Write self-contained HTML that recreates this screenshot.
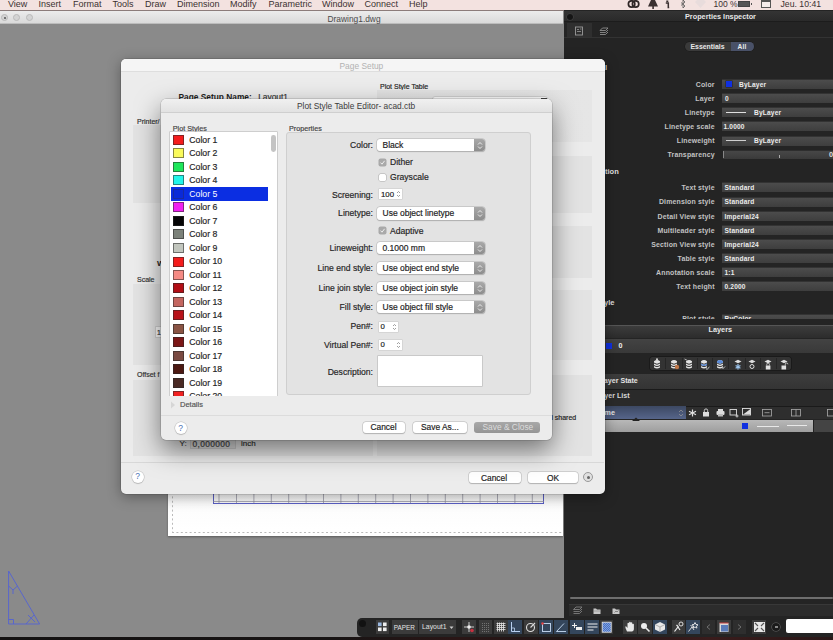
<!DOCTYPE html>
<html><head><meta charset="utf-8">
<style>
*{margin:0;padding:0;box-sizing:border-box}
html,body{width:833px;height:640px;overflow:hidden}
body{position:relative;background:#8a8a8a;font-family:"Liberation Sans",sans-serif;color:#222}
.a{position:absolute}
.t{position:absolute;white-space:nowrap;line-height:1}
.b{font-weight:bold}
.s{-webkit-text-stroke:0.18px currentColor}
</style></head><body>

<!-- menubar -->
<div class="a" style="left:0;top:0;width:833px;height:11px;background:#f3e2e0;border-bottom:1px solid #8c7c7a"></div>
<div class="t" style="left:8px;top:-0.4px;font-size:9px;color:#3b3131">View</div>
<div class="t" style="left:38.5px;top:-0.4px;font-size:9px;color:#3b3131">Insert</div>
<div class="t" style="left:73px;top:-0.4px;font-size:9px;color:#3b3131">Format</div>
<div class="t" style="left:112.5px;top:-0.4px;font-size:9px;color:#3b3131">Tools</div>
<div class="t" style="left:145px;top:-0.4px;font-size:9px;color:#3b3131">Draw</div>
<div class="t" style="left:177px;top:-0.4px;font-size:9px;color:#3b3131">Dimension</div>
<div class="t" style="left:230px;top:-0.4px;font-size:9px;color:#3b3131">Modify</div>
<div class="t" style="left:268.5px;top:-0.4px;font-size:9px;color:#3b3131">Parametric</div>
<div class="t" style="left:322px;top:-0.4px;font-size:9px;color:#3b3131">Window</div>
<div class="t" style="left:364.5px;top:-0.4px;font-size:9px;color:#3b3131">Connect</div>
<div class="t" style="left:409px;top:-0.4px;font-size:9px;color:#3b3131">Help</div>


<!-- menubar status icons -->
<svg class="a" style="left:626.5px;top:0" width="14" height="9"><circle cx="4.6" cy="4" r="3.2" stroke="#2e2626" stroke-width="1.7" fill="none"/><circle cx="8.6" cy="4" r="3.2" stroke="#2e2626" stroke-width="1.7" fill="none"/></svg>
<svg class="a" style="left:646.5px;top:0" width="12" height="10"><path d="M4 0H8L11 6.5H1Z" fill="#3a3030"/><rect x="5.3" y="6" width="1.6" height="3" fill="#3a3030"/></svg>
<svg class="a" style="left:665px;top:0" width="5" height="9"><rect x="1.3" y="0.5" width="2" height="1.5" fill="#3a3030"/><path d="M0.8 3H3.3V7.5H4.2" stroke="#3a3030" stroke-width="1.5" fill="none"/></svg>
<svg class="a" style="left:679.5px;top:0" width="6" height="10"><path d="M1 2.5L5 6L3 8V0L5 2L1 5.5" stroke="#555" stroke-width="0.8" fill="none"/></svg>
<svg class="a" style="left:694px;top:0" width="13" height="9"><path d="M1 2L6.5 8L12 2L10 0H3Z" fill="#e8dcdc"/></svg>
<div class="t" style="left:713.5px;top:-0.2px;font-size:8.5px;color:#3b3131">100 %</div>
<div class="a" style="left:737.5px;top:0.5px;width:12.5px;height:6.5px;background:#555;border:1px solid #444"></div>
<div class="a" style="left:750.5px;top:2.5px;width:1.2px;height:2.5px;background:#555"></div>
<div class="a" style="left:760.5px;top:0;width:10px;height:8px;background:#f4eceb;border:1px solid #555;border-top:2px solid #555"></div>
<div class="t" style="left:780.5px;top:-0.2px;font-size:8.7px;color:#3b3131">Jeu. 10:41</div>
<!-- window titlebar -->
<div class="a" style="left:0;top:11px;width:563px;height:13px;background:linear-gradient(#ececec,#dadada);border-bottom:1px solid #bcbcbc"></div>
<div class="a" style="left:1px;top:14px;width:7px;height:7px;border-radius:50%;background:#d4d4d4;border:1px solid #bababa"></div>
<div class="a" style="left:3.5px;top:16.5px;width:2px;height:2px;border-radius:50%;background:#555"></div>
<div class="a" style="left:13px;top:14px;width:7px;height:7px;border-radius:50%;background:#d4d4d4;border:1px solid #bababa"></div>
<div class="a" style="left:26px;top:14px;width:7px;height:7px;border-radius:50%;background:#d4d4d4;border:1px solid #bababa"></div>
<div class="t" style="left:327.5px;top:14.5px;font-size:8.4px;color:#4a4a4a">Drawing1.dwg</div>

<!-- canvas content -->
<div id="paper" class="a" style="left:168px;top:300px;width:395px;height:235.5px;background:linear-gradient(#e6e6e6 0px,#ffffff 230px);box-shadow:0 1px 2px rgba(0,0,0,.35)"></div>


<!-- blue grid on paper -->
<svg class="a" style="left:0;top:0" width="833" height="640">
 <g stroke="#4a4ec0" stroke-width="0.9" fill="none">
  <line x1="213.5" y1="470" x2="213.5" y2="503.5"/>
  <line x1="543.5" y1="470" x2="543.5" y2="503.5"/>
  <line x1="213" y1="503.5" x2="544" y2="503.5"/>
 </g>
 <g stroke="#8c8c9c" stroke-width="0.7" fill="none">
  <line x1="213" y1="501.5" x2="544" y2="501.5"/>
  <path d="M219 470V503 M236.5 470V503 M253.9 470V503 M271.3 470V503 M288.7 470V503 M306.1 470V503 M323.5 470V503 M340.9 470V503 M358.3 470V503 M375.7 470V503 M393.1 470V503 M410.5 470V503 M427.9 470V503 M445.3 470V503 M462.7 470V503 M480.1 470V503 M497.5 470V503 M514.9 470V503 M532.3 470V503"/>
 </g>
 <g stroke="#a8a8a8" stroke-width="0.8" stroke-dasharray="2,2.4" fill="none">
  <line x1="172" y1="532.5" x2="563" y2="532.5"/>
  <line x1="172.5" y1="470" x2="172.5" y2="532"/>
 </g>
 <!-- triangle -->
 <g stroke="#5262d4" stroke-width="0.9" fill="none">
  <path d="M8.6 571 L8.6 624 L39.6 624 Z"/>
  <path d="M8.6 619.5 H13.5 V624"/>
  <path d="M8.6 586 L13 590 L17.5 586 M13 590 V594"/>
  <path d="M26 624 L34 615 M28 615 L35 622"/>
 </g>
</svg>

<!-- Right dark panel -->
<div class="a" style="left:563.5px;top:10px;width:270px;height:627px;background:#242424"></div>
<div class="a" style="left:563.5px;top:11px;width:270px;height:10.5px;background:linear-gradient(#343434,#2a2a2a);border-bottom:1px solid #1c1c1c"></div>
<div class="a" style="left:566.5px;top:14px;width:6px;height:6px;border-radius:50%;background:#151515;box-shadow:0 0 0 0.5px #444"></div>
<div class="t b" style="left:685px;top:13.4px;font-size:7.3px;color:#e6e6e6">Properties Inspector</div>
<div class="a" style="left:567px;top:22.5px;width:25px;height:14.5px;background:#2f2f2f"></div>
<div class="a" style="left:563.5px;top:37px;width:270px;height:1px;background:#333"></div>
<svg class="a" style="left:574px;top:26px" width="11" height="10"><rect x="1.5" y="1" width="7" height="8" fill="none" stroke="#9a9a9a" stroke-width="0.9"/><path d="M3 3.5h2M3 5.5h4M6 3h1.5" stroke="#9a9a9a" stroke-width="0.8"/></svg>
<svg class="a" style="left:598px;top:26px" width="12" height="10"><path d="M2 4.5L4.5 2H10L7.5 4.5Z M2 6.5H7.5L10 4 M2 8.5H7.5L10 6" stroke="#9a9a9a" stroke-width="0.8" fill="none"/></svg>
<div class="a" style="left:685px;top:41.6px;width:68.5px;height:9.2px;border-radius:4.6px;background:#3a3a3a;box-shadow:0 0 0 0.5px #1a1a1a;overflow:hidden"><div class="a" style="left:45.5px;top:0;width:23px;height:100%;background:#495168"></div></div>
<div class="t b" style="left:690.5px;top:43.5px;font-size:6.9px;color:#e8e8e8">Essentials</div>
<div class="t b" style="left:737.5px;top:44.40px;font-size:6.6px;letter-spacing:0.17px;color:#ececec">All</div>
<div class="t b" style="right:226px;top:63.5px;font-size:7.5px;color:#e0e0e0">General</div>
<div class="t b" style="left:605px;top:167.5px;font-size:7.5px;color:#e0e0e0">tion</div>
<div class="t b" style="left:604px;top:299px;font-size:7.5px;color:#e0e0e0">yle</div>
<div class="t b" style="right:118.29999999999995px;top:81.70px;font-size:6.95px;letter-spacing:0.17px;color:#c2c2c2">Color</div><div class="a" style="left:721.8px;top:78.80px;width:112px;height:10px;background:linear-gradient(#4c4c4c,#3e3e3e);border-top:1px solid #333"></div><div class="a" style="left:726px;top:80.8px;width:6px;height:6px;background:#1030e0;box-shadow:0 0 0 0.5px #222"></div><div class="t b" style="left:739px;top:81.70px;font-size:6.6px;letter-spacing:0.17px;color:#ececec">ByLayer</div>
<div class="t b" style="right:118.29999999999995px;top:95.80px;font-size:6.95px;letter-spacing:0.17px;color:#c2c2c2">Layer</div><div class="a" style="left:721.8px;top:92.90px;width:112px;height:10px;background:linear-gradient(#4c4c4c,#3e3e3e);border-top:1px solid #333"></div><div class="t b" style="left:725px;top:95.80px;font-size:6.6px;letter-spacing:0.17px;color:#ececec">0</div>
<div class="t b" style="right:118.29999999999995px;top:109.90px;font-size:6.95px;letter-spacing:0.17px;color:#c2c2c2">Linetype</div><div class="a" style="left:721.8px;top:107.00px;width:112px;height:10px;background:linear-gradient(#4c4c4c,#3e3e3e);border-top:1px solid #333"></div><div class="a" style="left:725.7px;top:111.5px;width:20px;height:1px;background:#e0e0e0"></div><div class="t b" style="left:754px;top:109.90px;font-size:6.6px;letter-spacing:0.17px;color:#ececec">ByLayer</div>
<div class="t b" style="right:118.29999999999995px;top:124.10px;font-size:6.95px;letter-spacing:0.17px;color:#c2c2c2">Linetype scale</div><div class="a" style="left:721.8px;top:121.20px;width:112px;height:10px;background:linear-gradient(#4c4c4c,#3e3e3e);border-top:1px solid #333"></div><div class="t b" style="left:723.5px;top:124.10px;font-size:6.6px;letter-spacing:0.17px;color:#ececec">1.0000</div>
<div class="t b" style="right:118.29999999999995px;top:138.20px;font-size:6.95px;letter-spacing:0.17px;color:#c2c2c2">Lineweight</div><div class="a" style="left:721.8px;top:135.55px;width:112px;height:10px;background:linear-gradient(#4c4c4c,#3e3e3e);border-top:1px solid #333"></div><div class="a" style="left:725.7px;top:139.8px;width:20px;height:1.2px;background:#cfcfcf"></div><div class="t b" style="left:754px;top:138.20px;font-size:6.6px;letter-spacing:0.17px;color:#ececec">ByLayer</div>
<div class="t b" style="right:118.29999999999995px;top:152.30px;font-size:6.95px;letter-spacing:0.17px;color:#c2c2c2">Transparency</div>
<div class="a" style="left:723px;top:150.4px;width:110px;height:8.5px;background:linear-gradient(#474747,#3a3a3a);border-top:1px solid #2e2e2e"></div><div class="a" style="left:778.5px;top:155px;width:1px;height:3px;background:#aaa"></div><div class="a" style="left:723px;top:151px;width:1px;height:7px;background:#888"></div><div class="t b" style="left:829px;top:150.6px;font-size:7.4px;color:#ddd">0</div>
<div class="t b" style="right:118.29999999999995px;top:185.30px;font-size:6.95px;letter-spacing:0.17px;color:#c2c2c2">Text style</div><div class="a" style="left:721.8px;top:182.40px;width:112px;height:10px;background:linear-gradient(#4c4c4c,#3e3e3e);border-top:1px solid #333"></div><div class="t b" style="left:724.5px;top:185.30px;font-size:6.6px;letter-spacing:0.17px;color:#ececec">Standard</div>
<div class="t b" style="right:118.29999999999995px;top:199.40px;font-size:6.95px;letter-spacing:0.17px;color:#c2c2c2">Dimension style</div><div class="a" style="left:721.8px;top:196.50px;width:112px;height:10px;background:linear-gradient(#4c4c4c,#3e3e3e);border-top:1px solid #333"></div><div class="t b" style="left:724.5px;top:199.40px;font-size:6.6px;letter-spacing:0.17px;color:#ececec">Standard</div>
<div class="t b" style="right:118.29999999999995px;top:213.50px;font-size:6.95px;letter-spacing:0.17px;color:#c2c2c2">Detail View style</div><div class="a" style="left:721.8px;top:210.60px;width:112px;height:10px;background:linear-gradient(#4c4c4c,#3e3e3e);border-top:1px solid #333"></div><div class="t b" style="left:724.5px;top:213.50px;font-size:6.6px;letter-spacing:0.17px;color:#ececec">Imperial24</div>
<div class="t b" style="right:118.29999999999995px;top:227.60px;font-size:6.95px;letter-spacing:0.17px;color:#c2c2c2">Multileader style</div><div class="a" style="left:721.8px;top:224.70px;width:112px;height:10px;background:linear-gradient(#4c4c4c,#3e3e3e);border-top:1px solid #333"></div><div class="t b" style="left:724.5px;top:227.60px;font-size:6.6px;letter-spacing:0.17px;color:#ececec">Standard</div>
<div class="t b" style="right:118.29999999999995px;top:241.70px;font-size:6.95px;letter-spacing:0.17px;color:#c2c2c2">Section View style</div><div class="a" style="left:721.8px;top:238.80px;width:112px;height:10px;background:linear-gradient(#4c4c4c,#3e3e3e);border-top:1px solid #333"></div><div class="t b" style="left:724.5px;top:241.70px;font-size:6.6px;letter-spacing:0.17px;color:#ececec">Imperial24</div>
<div class="t b" style="right:118.29999999999995px;top:255.80px;font-size:6.95px;letter-spacing:0.17px;color:#c2c2c2">Table style</div><div class="a" style="left:721.8px;top:252.90px;width:112px;height:10px;background:linear-gradient(#4c4c4c,#3e3e3e);border-top:1px solid #333"></div><div class="t b" style="left:724.5px;top:255.80px;font-size:6.6px;letter-spacing:0.17px;color:#ececec">Standard</div>
<div class="t b" style="right:118.29999999999995px;top:269.90px;font-size:6.95px;letter-spacing:0.17px;color:#c2c2c2">Annotation scale</div><div class="a" style="left:721.8px;top:267.00px;width:112px;height:10px;background:linear-gradient(#4c4c4c,#3e3e3e);border-top:1px solid #333"></div><div class="t b" style="left:724.5px;top:269.90px;font-size:6.6px;letter-spacing:0.17px;color:#ececec">1:1</div>
<div class="t b" style="right:118.29999999999995px;top:284.00px;font-size:6.95px;letter-spacing:0.17px;color:#c2c2c2">Text height</div><div class="a" style="left:721.8px;top:281.10px;width:112px;height:10px;background:linear-gradient(#4c4c4c,#3e3e3e);border-top:1px solid #333"></div><div class="t b" style="left:724.5px;top:284.00px;font-size:6.6px;letter-spacing:0.17px;color:#ececec">0.2000</div>
<div class="t b" style="right:118.29999999999995px;top:316.40px;font-size:6.95px;letter-spacing:0.17px;color:#c2c2c2">Plot style</div><div class="a" style="left:721.8px;top:313.50px;width:112px;height:10px;background:linear-gradient(#4c4c4c,#3e3e3e);border-top:1px solid #333"></div><div class="t b" style="left:724.5px;top:316.40px;font-size:6.6px;letter-spacing:0.17px;color:#ececec">ByColor</div>
<!-- Layers header -->
<div class="a" style="left:563.5px;top:318.8px;width:270px;height:6px;background:#242424"></div>
<div class="a" style="left:563.5px;top:324.5px;width:270px;height:13px;background:linear-gradient(#3c3c3c,#2c2c2c);border-top:1px solid #555"></div>
<div class="t b" style="left:708.5px;top:326.2px;font-size:7.3px;color:#e8e8e8">Layers</div>
<div class="a" style="left:563.5px;top:338.5px;width:270px;height:14.5px;background:linear-gradient(#434343,#393939)"></div>
<div class="a" style="left:605.6px;top:343.2px;width:6px;height:5.6px;background:#1030e0"></div>
<div class="t b" style="left:618.5px;top:342.5px;font-size:7.1px;color:#eee">0</div>
<div class="a" style="left:649.5px;top:357px;width:141.5px;height:12.5px;background:#333;border-radius:2px;box-shadow:0 0 0 0.5px #111"></div>
<div class="a" style="left:563.5px;top:373.5px;width:270px;height:15.5px;background:linear-gradient(#3d3d3d,#343434)"></div>
<div class="t b" style="left:599.5px;top:378.2px;font-size:7.1px;color:#e4e4e4">Layer State</div>
<div class="a" style="left:563.5px;top:389px;width:270px;height:17px;background:#2a2a2a;border-top:1px solid #1a1a1a"></div>
<div class="t b" style="left:596px;top:393.2px;font-size:7.1px;color:#d8d8d8">Layer List</div>
<div class="a" style="left:563.5px;top:406px;width:270px;height:13px;background:#2e2e2e;border-top:1px solid #1a1a1a"></div>
<div class="a" style="left:563.5px;top:406px;width:122px;height:13px;background:linear-gradient(#3c4862,#56658a)"></div>
<div class="t b" style="left:595.5px;top:410.2px;font-size:7.1px;color:#e8e8e8">Name</div>
<div class="a" style="left:563.5px;top:420px;width:250px;height:12px;background:linear-gradient(#b8b8b8,#9e9e9e)"></div>
<div class="a" style="left:813px;top:420px;width:20px;height:12px;background:#444;border-left:1px solid #222"></div>
<div class="a" style="left:742px;top:423px;width:6px;height:6px;background:#1030e0"></div>
<div class="a" style="left:757px;top:425.5px;width:22px;height:1.2px;background:#e8e8e8"></div>
<div class="a" style="left:787px;top:425px;width:20px;height:1.2px;background:#e8e8e8"></div>
<!-- bottom of panel -->
<div class="a" style="left:570px;top:597px;width:263px;height:2px;border-radius:1px;background:#6e6e6e"></div>
<div class="a" style="left:569px;top:604.3px;width:264px;height:12px;background:#2c2c2c;border-top:1px solid #383838"></div>


<!-- Page Setup dialog -->
<div class="a" style="left:121px;top:59px;width:484px;height:435px;background:#ececec;border-radius:5px;box-shadow:0 3px 14px rgba(0,0,0,.35),0 0 0 0.5px rgba(0,0,0,.2)"></div>
<div class="a" style="left:121px;top:59px;width:484px;height:13px;background:#f5f5f5;border-radius:5px 5px 0 0;border-bottom:1px solid #dedede"></div>
<div class="t" style="left:339.5px;top:61.7px;font-size:8.4px;color:#b2b2b2">Page Setup</div>
<div class="t b" style="left:178.5px;top:93px;font-size:8.35px;color:#1e1e1e">Page Setup Name:</div>
<div class="t s" style="left:258.2px;top:93px;font-size:8.4px;color:#333">Layout1</div>
<div class="t s" style="left:380px;top:82.5px;font-size:7px;color:#262626">Plot Style Table</div>
<div class="a" style="left:377px;top:90px;width:215px;height:52px;background:linear-gradient(90deg,#e2e2e2,#e6e6e6)"></div>
<div class="a" style="left:432px;top:96px;width:116px;height:12px;background:#fafafa;border-radius:3px;border:1px solid #cfcfcf"></div>
<div class="a" style="left:541px;top:97.5px;width:6px;height:1.2px;background:#444"></div>
<div class="a" style="left:377px;top:156px;width:215px;height:57px;background:#e3e3e3"></div>
<div class="a" style="left:377px;top:226px;width:215px;height:52px;background:#e3e3e3"></div>
<div class="a" style="left:377px;top:290px;width:215px;height:70px;background:#e3e3e3"></div>
<div class="a" style="left:377px;top:375px;width:215px;height:81px;background:#e3e3e3"></div>
<div class="t s" style="left:549px;top:413.5px;font-size:7px;color:#262626">d shared</div>

<div class="t s" style="left:137px;top:117.5px;font-size:7px;color:#333">Printer/</div>
<div class="a" style="left:133px;top:125px;width:240px;height:78px;background:#e3e3e3"></div>
<div class="t b" style="left:157px;top:260px;font-size:8px;color:#222">W</div>
<div class="t s" style="left:137px;top:275.5px;font-size:7px;color:#333">Scale</div>
<div class="a" style="left:133px;top:284px;width:240px;height:81px;background:#e3e3e3"></div>
<div class="a" style="left:155px;top:326px;width:10px;height:12px;background:#fafafa;border:1px solid #d0d0d0"></div>
<div class="t s" style="left:157px;top:328.5px;font-size:7px;color:#333">1</div>
<div class="t s" style="left:137px;top:370.5px;font-size:7px;color:#333">Offset f</div>
<div class="a" style="left:133px;top:380px;width:240px;height:76px;background:#e3e3e3"></div>
<div class="t s" style="left:179.5px;top:439.5px;font-size:8px;color:#333">Y:</div>
<div class="a" style="left:190px;top:439px;width:46px;height:10px;background:#d8d8d8;border:0.5px solid #c8c8c8"></div>
<div class="t s" style="left:192.5px;top:439.8px;font-size:8.4px;letter-spacing:0.35px;color:#444">0,000000</div>
<div class="t s" style="left:241px;top:439.5px;font-size:8px;color:#333">inch</div>
<div class="a" style="left:121px;top:461.5px;width:483px;height:1px;background:#d8d8d8"></div>
<div class="a" style="left:132px;top:470.5px;width:12px;height:12px;border-radius:50%;background:#fff;box-shadow:0 0 0 0.5px #bbb,0 1px 1px rgba(0,0,0,.2)"></div>
<div class="t" style="left:135.3px;top:472.3px;font-size:8.5px;color:#4a6fb5">?</div>
<div class="a" style="left:468.5px;top:471.5px;width:52.5px;height:11px;background:#fff;border-radius:3px;box-shadow:0 0 0 0.5px #b8b8b8,0 0.5px 1px rgba(0,0,0,.25)"></div>
<div class="t s" style="left:481px;top:473.5px;font-size:8.4px;color:#222">Cancel</div>
<div class="a" style="left:528px;top:471.5px;width:50px;height:11px;background:#fff;border-radius:3px;box-shadow:0 0 0 0.5px #b8b8b8,0 0.5px 1px rgba(0,0,0,.25)"></div>
<div class="t s" style="left:547px;top:473.5px;font-size:8.4px;color:#222">OK</div>
<div class="a" style="left:583px;top:472px;width:10px;height:10px;border-radius:50%;background:#e0e0e0;border:1px solid #999"></div>
<div class="a" style="left:586.5px;top:475.5px;width:3px;height:3px;border-radius:50%;background:#666"></div>


<!-- Plot Style Table Editor -->
<div class="a" style="left:161px;top:99px;width:391px;height:341px;background:#ececec;border-radius:5px;box-shadow:0 10px 26px rgba(0,0,0,.5),0 0 0 0.5px rgba(0,0,0,.22)"></div>
<div class="a" style="left:161px;top:99px;width:391px;height:13.5px;background:linear-gradient(#f0f0f0,#e2e2e2);border-radius:5px 5px 0 0;border-bottom:1px solid #cfcfcf"></div>
<div class="t" style="left:297px;top:102.3px;font-size:8.35px;color:#3c3c3c">Plot Style Table Editor- acad.ctb</div>
<div class="t s" style="left:172.8px;top:124.8px;font-size:7.2px;color:#444">Plot Styles</div>
<div class="a" style="left:169.5px;top:132.3px;width:107.5px;height:263.5px;background:#fff;box-shadow:0 0 0 0.6px #b9b9b9;overflow:hidden"></div>
<div class="a" style="left:169.5px;top:132.3px;width:107.5px;height:263.5px;overflow:hidden">
</div>
<div class="a" style="left:173.3px;top:134.85px;width:11px;height:10px;background:#f41c1c;border:1px solid rgba(40,40,40,.55)"></div>
<div class="t s" style="left:189.3px;top:135.55px;font-size:8.7px;color:#262626">Color 1</div>
<div class="a" style="left:173.3px;top:148.35px;width:11px;height:10px;background:#fafa5a;border:1px solid rgba(40,40,40,.55)"></div>
<div class="t s" style="left:189.3px;top:149.05px;font-size:8.7px;color:#262626">Color 2</div>
<div class="a" style="left:173.3px;top:161.85px;width:11px;height:10px;background:#1ee65a;border:1px solid rgba(40,40,40,.55)"></div>
<div class="t s" style="left:189.3px;top:162.55px;font-size:8.7px;color:#262626">Color 3</div>
<div class="a" style="left:173.3px;top:175.35px;width:11px;height:10px;background:#22f5ea;border:1px solid rgba(40,40,40,.55)"></div>
<div class="t s" style="left:189.3px;top:176.05px;font-size:8.7px;color:#262626">Color 4</div>
<div class="a" style="left:170.5px;top:187.05px;width:97px;height:13.5px;background:#0b2ee2"></div>
<div class="a" style="left:173.3px;top:188.85px;width:11px;height:10px;background:#0a2ad8;border:1px solid #1a2aa0"></div>
<div class="t" style="left:189.3px;top:189.55px;font-size:8.7px;color:#fff">Color 5</div>
<div class="a" style="left:173.3px;top:202.35px;width:11px;height:10px;background:#f020f0;border:1px solid rgba(40,40,40,.55)"></div>
<div class="t s" style="left:189.3px;top:203.05px;font-size:8.7px;color:#262626">Color 6</div>
<div class="a" style="left:173.3px;top:215.85px;width:11px;height:10px;background:#050505;border:1px solid rgba(40,40,40,.55)"></div>
<div class="t s" style="left:189.3px;top:216.55px;font-size:8.7px;color:#262626">Color 7</div>
<div class="a" style="left:173.3px;top:229.35px;width:11px;height:10px;background:#7c827a;border:1px solid rgba(40,40,40,.55)"></div>
<div class="t s" style="left:189.3px;top:230.05px;font-size:8.7px;color:#262626">Color 8</div>
<div class="a" style="left:173.3px;top:242.85px;width:11px;height:10px;background:#c2c6be;border:1px solid rgba(40,40,40,.55)"></div>
<div class="t s" style="left:189.3px;top:243.55px;font-size:8.7px;color:#262626">Color 9</div>
<div class="a" style="left:173.3px;top:257.05px;width:11px;height:10px;background:#f41c1c;border:1px solid rgba(40,40,40,.55)"></div>
<div class="t s" style="left:189.3px;top:257.05px;font-size:8.7px;color:#262626">Color 10</div>
<div class="a" style="left:173.3px;top:269.85px;width:11px;height:10px;background:#f58a84;border:1px solid rgba(40,40,40,.55)"></div>
<div class="t s" style="left:189.3px;top:270.55px;font-size:8.7px;color:#262626">Color 11</div>
<div class="a" style="left:173.3px;top:283.35px;width:11px;height:10px;background:#b20e16;border:1px solid rgba(40,40,40,.55)"></div>
<div class="t s" style="left:189.3px;top:284.05px;font-size:8.7px;color:#262626">Color 12</div>
<div class="a" style="left:173.3px;top:296.85px;width:11px;height:10px;background:#c46660;border:1px solid rgba(40,40,40,.55)"></div>
<div class="t s" style="left:189.3px;top:297.55px;font-size:8.7px;color:#262626">Color 13</div>
<div class="a" style="left:173.3px;top:310.35px;width:11px;height:10px;background:#b8121a;border:1px solid rgba(40,40,40,.55)"></div>
<div class="t s" style="left:189.3px;top:311.05px;font-size:8.7px;color:#262626">Color 14</div>
<div class="a" style="left:173.3px;top:323.85px;width:11px;height:10px;background:#8a5444;border:1px solid rgba(40,40,40,.55)"></div>
<div class="t s" style="left:189.3px;top:324.55px;font-size:8.7px;color:#262626">Color 15</div>
<div class="a" style="left:173.3px;top:337.35px;width:11px;height:10px;background:#7c1616;border:1px solid rgba(40,40,40,.55)"></div>
<div class="t s" style="left:189.3px;top:338.05px;font-size:8.7px;color:#262626">Color 16</div>
<div class="a" style="left:173.3px;top:350.85px;width:11px;height:10px;background:#7a4a42;border:1px solid rgba(40,40,40,.55)"></div>
<div class="t s" style="left:189.3px;top:351.55px;font-size:8.7px;color:#262626">Color 17</div>
<div class="a" style="left:173.3px;top:364.35px;width:11px;height:10px;background:#4c1812;border:1px solid rgba(40,40,40,.55)"></div>
<div class="t s" style="left:189.3px;top:365.05px;font-size:8.7px;color:#262626">Color 18</div>
<div class="a" style="left:173.3px;top:377.85px;width:11px;height:10px;background:#4a2a24;border:1px solid rgba(40,40,40,.55)"></div>
<div class="t s" style="left:189.3px;top:378.55px;font-size:8.7px;color:#262626">Color 19</div>
<div class="a" style="left:173.3px;top:391.35px;width:11px;height:10px;background:#f02020;border:1px solid rgba(40,40,40,.55)"></div>
<div class="t s" style="left:189.3px;top:392.05px;font-size:8.7px;color:#262626">Color 20</div>
<div class="a" style="left:168.5px;top:395.8px;width:110px;height:6px;background:#ececec"></div>
<div class="a" style="left:271px;top:135px;width:4.8px;height:17px;border-radius:2.4px;background:#c4c4c4"></div>
<svg class="a" style="left:170px;top:400.5px" width="6" height="8"><path d="M1 0.5L5 4L1 7.5Z" fill="#d6d6d6"/></svg>
<div class="t s" style="left:180px;top:400.8px;font-size:7.5px;color:#555">Details</div>
<div class="a" style="left:161px;top:414.5px;width:391px;height:1px;background:#dcdcdc"></div>
<div class="a" style="left:175px;top:421.8px;width:12px;height:12px;border-radius:50%;background:#fff;box-shadow:0 0 0 0.5px #bbb,0 1px 1px rgba(0,0,0,.2)"></div>
<div class="t" style="left:178.3px;top:423.6px;font-size:8.5px;color:#4a6fb5">?</div>
<div class="a" style="left:362.5px;top:421.5px;width:42px;height:11.7px;background:#fff;border-radius:3px;box-shadow:0 0 0 0.5px #b8b8b8,0 0.5px 1px rgba(0,0,0,.25)"></div>
<div class="t s" style="left:370.5px;top:423px;font-size:8.4px;color:#222">Cancel</div>
<div class="a" style="left:413px;top:421.5px;width:53.5px;height:11.7px;background:#fff;border-radius:3px;box-shadow:0 0 0 0.5px #b8b8b8,0 0.5px 1px rgba(0,0,0,.25)"></div>
<div class="t s" style="left:421px;top:423px;font-size:8.4px;color:#222">Save As...</div>
<div class="a" style="left:474.3px;top:421.5px;width:65.5px;height:11.7px;background:linear-gradient(#a8a8a8,#959595);border-radius:3px"></div>
<div class="t" style="left:482.5px;top:423px;font-size:8.4px;color:#dcdcdc">Save &amp; Close</div>

<div class="t s" style="left:289px;top:124.8px;font-size:7.2px;color:#444">Properties</div>
<div class="a" style="left:285.5px;top:132.3px;width:245px;height:262.6px;background:#e3e3e3;border:1px solid #cfcfcf;border-radius:3px"></div>
<div class="t s" style="right:460px;top:141.20px;font-size:8.6px;color:#262626">Color:</div>
<div class="a" style="left:377px;top:138.80px;width:107.5px;height:12.4px;background:#fff;border-radius:3px;box-shadow:0 0 0 0.5px #b5b5b5,0 0.7px 1px rgba(0,0,0,.25);overflow:hidden"><div class="a" style="right:0;top:0;width:11px;height:100%;background:linear-gradient(#a9a9a9,#8d8d8d)"></div></div>
<svg class="a" style="left:476.5px;top:140.80px" width="6" height="9"><path d="M1 3.5L3 1.5L5 3.5M1 5.5L3 7.5L5 5.5" stroke="#f4f4f4" stroke-width="0.9" fill="none"/></svg>
<div class="t s" style="left:382.5px;top:140.90px;font-size:8.5px;color:#222">Black</div>
<div class="a" style="left:378.6px;top:158.80px;width:7px;height:7px;border-radius:1.5px;background:#a9a9a9;box-shadow:0 0 0 0.5px #aaa"></div><svg class="a" style="left:378.6px;top:158.80px" width="7" height="7"><path d="M1.5 3.6L3 5.2L5.6 1.8" stroke="#eee" stroke-width="1" fill="none"/></svg><div class="t s" style="left:390px;top:158.20px;font-size:8.6px;color:#262626">Dither</div>
<div class="a" style="left:378.6px;top:173.60px;width:7px;height:7px;border-radius:1.5px;background:#fff;box-shadow:0 0 0 0.5px #aaa"></div><div class="t s" style="left:390px;top:173.00px;font-size:8.6px;color:#262626">Grayscale</div>
<div class="t s" style="right:460px;top:190.90px;font-size:8.6px;color:#262626">Screening:</div>
<div class="a" style="left:379px;top:189.40px;width:23px;height:10px;background:#fff;box-shadow:0 0 0 0.5px #c8c8c8"></div>
<div class="t s" style="left:381px;top:190.70px;font-size:7.8px;color:#222">100</div>
<svg class="a" style="left:396px;top:190.40px" width="5" height="8"><path d="M1 3L2.5 1.5L4 3M1 5L2.5 6.5L4 5" stroke="#777" stroke-width="0.7" fill="none"/></svg>
<div class="t s" style="right:460px;top:209.40px;font-size:8.6px;color:#262626">Linetype:</div>
<div class="a" style="left:377px;top:207.30px;width:107.5px;height:12.4px;background:#fff;border-radius:3px;box-shadow:0 0 0 0.5px #b5b5b5,0 0.7px 1px rgba(0,0,0,.25);overflow:hidden"><div class="a" style="right:0;top:0;width:11px;height:100%;background:linear-gradient(#a9a9a9,#8d8d8d)"></div></div>
<svg class="a" style="left:476.5px;top:209.30px" width="6" height="9"><path d="M1 3.5L3 1.5L5 3.5M1 5.5L3 7.5L5 5.5" stroke="#f4f4f4" stroke-width="0.9" fill="none"/></svg>
<div class="t s" style="left:382.5px;top:209.40px;font-size:8.5px;color:#222">Use object linetype</div>
<div class="a" style="left:378.6px;top:227.20px;width:7px;height:7px;border-radius:1.5px;background:#a9a9a9;box-shadow:0 0 0 0.5px #aaa"></div><svg class="a" style="left:378.6px;top:227.20px" width="7" height="7"><path d="M1.5 3.6L3 5.2L5.6 1.8" stroke="#eee" stroke-width="1" fill="none"/></svg><div class="t s" style="left:390px;top:226.60px;font-size:8.6px;color:#262626">Adaptive</div>
<div class="t s" style="right:460px;top:244.10px;font-size:8.6px;color:#262626">Lineweight:</div>
<div class="a" style="left:377px;top:242.00px;width:107.5px;height:12.4px;background:#fff;border-radius:3px;box-shadow:0 0 0 0.5px #b5b5b5,0 0.7px 1px rgba(0,0,0,.25);overflow:hidden"><div class="a" style="right:0;top:0;width:11px;height:100%;background:linear-gradient(#a9a9a9,#8d8d8d)"></div></div>
<svg class="a" style="left:476.5px;top:244.00px" width="6" height="9"><path d="M1 3.5L3 1.5L5 3.5M1 5.5L3 7.5L5 5.5" stroke="#f4f4f4" stroke-width="0.9" fill="none"/></svg>
<div class="t s" style="left:382.5px;top:244.10px;font-size:8.5px;color:#222">0.1000 mm</div>
<div class="t s" style="right:460px;top:263.90px;font-size:8.6px;color:#262626">Line end style:</div>
<div class="a" style="left:377px;top:261.80px;width:107.5px;height:12.4px;background:#fff;border-radius:3px;box-shadow:0 0 0 0.5px #b5b5b5,0 0.7px 1px rgba(0,0,0,.25);overflow:hidden"><div class="a" style="right:0;top:0;width:11px;height:100%;background:linear-gradient(#a9a9a9,#8d8d8d)"></div></div>
<svg class="a" style="left:476.5px;top:263.80px" width="6" height="9"><path d="M1 3.5L3 1.5L5 3.5M1 5.5L3 7.5L5 5.5" stroke="#f4f4f4" stroke-width="0.9" fill="none"/></svg>
<div class="t s" style="left:382.5px;top:263.90px;font-size:8.5px;color:#222">Use object end style</div>
<div class="t s" style="right:460px;top:283.70px;font-size:8.6px;color:#262626">Line join style:</div>
<div class="a" style="left:377px;top:281.60px;width:107.5px;height:12.4px;background:#fff;border-radius:3px;box-shadow:0 0 0 0.5px #b5b5b5,0 0.7px 1px rgba(0,0,0,.25);overflow:hidden"><div class="a" style="right:0;top:0;width:11px;height:100%;background:linear-gradient(#a9a9a9,#8d8d8d)"></div></div>
<svg class="a" style="left:476.5px;top:283.60px" width="6" height="9"><path d="M1 3.5L3 1.5L5 3.5M1 5.5L3 7.5L5 5.5" stroke="#f4f4f4" stroke-width="0.9" fill="none"/></svg>
<div class="t s" style="left:382.5px;top:283.70px;font-size:8.5px;color:#222">Use object join style</div>
<div class="t s" style="right:460px;top:303.20px;font-size:8.6px;color:#262626">Fill style:</div>
<div class="a" style="left:377px;top:301.10px;width:107.5px;height:12.4px;background:#fff;border-radius:3px;box-shadow:0 0 0 0.5px #b5b5b5,0 0.7px 1px rgba(0,0,0,.25);overflow:hidden"><div class="a" style="right:0;top:0;width:11px;height:100%;background:linear-gradient(#a9a9a9,#8d8d8d)"></div></div>
<svg class="a" style="left:476.5px;top:303.10px" width="6" height="9"><path d="M1 3.5L3 1.5L5 3.5M1 5.5L3 7.5L5 5.5" stroke="#f4f4f4" stroke-width="0.9" fill="none"/></svg>
<div class="t s" style="left:382.5px;top:303.20px;font-size:8.5px;color:#222">Use object fill style</div>
<div class="t s" style="right:460px;top:322.40px;font-size:8.6px;color:#262626">Pen#:</div>
<div class="a" style="left:378.5px;top:321.50px;width:19.0px;height:10px;background:#fff;box-shadow:0 0 0 0.5px #c8c8c8"></div>
<div class="t s" style="left:380.5px;top:322.80px;font-size:7.8px;color:#222">0</div>
<svg class="a" style="left:391.5px;top:322.50px" width="5" height="8"><path d="M1 3L2.5 1.5L4 3M1 5L2.5 6.5L4 5" stroke="#777" stroke-width="0.7" fill="none"/></svg>
<div class="t s" style="right:460px;top:340.90px;font-size:8.6px;color:#262626">Virtual Pen#:</div>
<div class="a" style="left:378.5px;top:340.00px;width:23.0px;height:10px;background:#fff;box-shadow:0 0 0 0.5px #c8c8c8"></div>
<div class="t s" style="left:380.5px;top:341.30px;font-size:7.8px;color:#222">0</div>
<svg class="a" style="left:395.5px;top:341.00px" width="5" height="8"><path d="M1 3L2.5 1.5L4 3M1 5L2.5 6.5L4 5" stroke="#777" stroke-width="0.7" fill="none"/></svg>
<div class="t s" style="right:460px;top:367.90px;font-size:8.6px;color:#262626">Description:</div>
<div class="a" style="left:377.5px;top:356px;width:104.5px;height:30px;background:#fff;box-shadow:0 0 0 0.6px #b8b8b8"></div>


<div class="a" style="left:665px;top:358px;width:1px;height:11px;background:#262626"></div><div class="a" style="left:681.5px;top:358px;width:1px;height:11px;background:#262626"></div><div class="a" style="left:697px;top:358px;width:1px;height:11px;background:#262626"></div><div class="a" style="left:712px;top:358px;width:1px;height:11px;background:#262626"></div><div class="a" style="left:728px;top:358px;width:1px;height:11px;background:#262626"></div><div class="a" style="left:745px;top:358px;width:1px;height:11px;background:#262626"></div><div class="a" style="left:760px;top:358px;width:1px;height:11px;background:#262626"></div><div class="a" style="left:776px;top:358px;width:1px;height:11px;background:#262626"></div>
<svg class="a" style="left:651.7px;top:357.5px" width="11" height="12"><path d="M2 3.2Q5 1 8 3.2V4.6Q5 6.8 2 4.6Z" fill="#e4e4e4"/><path d="M2 5.6Q5 7.8 8 5.6V7Q5 9.2 2 7Z" fill="#e4e4e4"/><path d="M2 8Q5 10.2 8 8V9.4Q5 11.6 2 9.4Z" fill="#e4e4e4"/><circle cx="5" cy="1.2" r="1" fill="#ddd"/></svg>
<svg class="a" style="left:668.8px;top:357.5px" width="11" height="12"><path d="M2 3.2Q5 1 8 3.2V4.6Q5 6.8 2 4.6Z" fill="#e4e4e4"/><path d="M2 5.6Q5 7.8 8 5.6V7Q5 9.2 2 7Z" fill="#e4e4e4"/><path d="M2 8Q5 10.2 8 8V9.4Q5 11.6 2 9.4Z" fill="#e4e4e4"/><circle cx="8" cy="9" r="2.2" fill="#c0784a"/></svg>
<svg class="a" style="left:684.1px;top:357.5px" width="11" height="12"><path d="M2 3.2Q5 1 8 3.2V4.6Q5 6.8 2 4.6Z" fill="#e4e4e4"/><path d="M2 5.6Q5 7.8 8 5.6V7Q5 9.2 2 7Z" fill="#e4e4e4"/><path d="M2 8Q5 10.2 8 8V9.4Q5 11.6 2 9.4Z" fill="#e4e4e4"/><path d="M0.5 1L3 2.2" stroke="#ccc" stroke-width="0.8"/></svg>
<svg class="a" style="left:699.4px;top:357.5px" width="11" height="12"><path d="M2 3.2Q5 1 8 3.2V4.6Q5 6.8 2 4.6Z" fill="#e4e4e4"/><path d="M2 5.6Q5 7.8 8 5.6V7Q5 9.2 2 7Z" fill="#e4e4e4"/><path d="M2 8Q5 10.2 8 8V9.4Q5 11.6 2 9.4Z" fill="#e4e4e4"/><path d="M2 5.6Q5 7.8 8 5.6V7Q5 9.2 2 7Z" fill="#5a8ad8"/><path d="M7 10.5l1.2 1 2.2-2.8" stroke="#ddd" stroke-width="0.8" fill="none"/></svg>
<svg class="a" style="left:714.7px;top:357.5px" width="11" height="12"><path d="M2 3.2Q5 1 8 3.2V4.6Q5 6.8 2 4.6Z" fill="#e4e4e4"/><path d="M2 5.6Q5 7.8 8 5.6V7Q5 9.2 2 7Z" fill="#e4e4e4"/><path d="M2 8Q5 10.2 8 8V9.4Q5 11.6 2 9.4Z" fill="#e4e4e4"/><path d="M2 3.2Q5 1 8 3.2V4.6Q5 6.8 2 4.6Z" fill="#5a8ad8"/><path d="M7.5 11l2.5-2.5" stroke="#ddd" stroke-width="0.9"/></svg>
<svg class="a" style="left:731.7px;top:357.5px" width="12" height="12"><path d="M2.5 3.5L6 1.8L9.5 3.5L6 5.2Z" fill="#e0e0e0"/><path d="M6 6v5.5M3.6 7.4l4.8 2.8M3.6 10.2l4.8-2.8" stroke="#9cc4ec" stroke-width="1.2"/></svg>
<svg class="a" style="left:746.1px;top:357.5px" width="12" height="12"><path d="M2.5 3.5L6 1.8L9.5 3.5L6 5.2Z" fill="#e0e0e0"/><circle cx="6" cy="8.5" r="2" stroke="#e0e0e0" stroke-width="1" fill="none"/></svg>
<svg class="a" style="left:762.4px;top:357.5px" width="12" height="12"><path d="M2.5 3.5L6 1.8L9.5 3.5L6 5.2Z" fill="#e0e0e0"/><rect x="3.8" y="7.5" width="4.6" height="4" fill="#e0e0e0"/><path d="M4.8 7.5v-1.2a1.3 1.3 0 0 1 2.6 0v1.2" stroke="#e0e0e0" stroke-width="0.8" fill="none"/></svg>
<svg class="a" style="left:777.7px;top:357.5px" width="12" height="12"><path d="M2.5 3.5L6 1.8L9.5 3.5L6 5.2Z" fill="#e0e0e0"/><rect x="3.5" y="7.5" width="4.6" height="4" fill="#e0e0e0"/><path d="M7.3 7.5v-1.2a1.3 1.3 0 0 1 2.6 0" stroke="#e0e0e0" stroke-width="0.8" fill="none"/></svg>
<svg class="a" style="left:677.5px;top:409px" width="6" height="8"><path d="M1 3L3 1L5 3M1 5L3 7L5 5" stroke="#999" stroke-width="0.7" fill="none"/></svg>
<svg class="a" style="left:630.5px;top:416.5px" width="10" height="4"><path d="M1 4L5 0.5L9 4Z" fill="#222"/></svg>
<svg class="a" style="left:688px;top:408.5px" width="9" height="8"><path d="M4.5 0.5v7M1 2.2l7 3.6M1 5.8l7-3.6" stroke="#e0e0e0" stroke-width="1.2"/></svg>
<svg class="a" style="left:702px;top:408px" width="8" height="9"><rect x="1" y="4" width="6" height="4.5" fill="#ddd"/><path d="M2.3 4V2.6a1.7 1.7 0 0 1 3.4 0V4" stroke="#ddd" stroke-width="0.9" fill="none"/></svg>
<svg class="a" style="left:715.5px;top:408px" width="9" height="9"><rect x="0.5" y="3" width="8" height="4" rx="1" fill="#ddd"/><rect x="2" y="1" width="5" height="2" fill="#ddd"/><rect x="2" y="6" width="5" height="2.5" fill="#bbb"/></svg>
<svg class="a" style="left:728.5px;top:407.5px" width="10" height="10"><rect x="1" y="1.5" width="6.5" height="5.5" stroke="#ddd" stroke-width="0.9" fill="none"/><path d="M8 6.5v3M6.5 8h3" stroke="#ddd" stroke-width="0.9"/></svg>
<svg class="a" style="left:741.5px;top:408px" width="10" height="8"><rect x="0.5" y="0.5" width="8" height="6.5" stroke="#ddd" stroke-width="0.9" fill="none"/><path d="M1 6.5L8.5 1V6.5Z" fill="#ddd"/></svg>
<svg class="a" style="left:762px;top:408.5px" width="10" height="8"><rect x="0.5" y="0.5" width="9" height="6.5" stroke="#aaa" stroke-width="0.8" fill="none"/><path d="M2.5 3.7h5" stroke="#aaa" stroke-width="0.8"/></svg>
<svg class="a" style="left:791px;top:408.5px" width="10" height="8"><rect x="0.5" y="0.5" width="9" height="6.5" stroke="#aaa" stroke-width="0.8" fill="none"/><path d="M5 0.5v6.5" stroke="#aaa" stroke-width="0.8"/></svg>
<svg class="a" style="left:827px;top:408.5px" width="6" height="8"><rect x="0.5" y="0.5" width="9" height="6.5" stroke="#aaa" stroke-width="0.8" fill="none"/></svg>

<svg class="a" style="left:572px;top:606px" width="11" height="9"><path d="M1.5 3.5L4 1H10L7.5 3.5Z M1.5 5.5H7.5L10 3 M1.5 7.5H7.5L10 5" stroke="#888" stroke-width="0.8" fill="none"/></svg>
<svg class="a" style="left:592px;top:606px" width="10" height="9"><path d="M1.5 2.5h2.5l1 1h3.5v4.5h-7Z" fill="#c8c8c8"/><path d="M1.5 5h7" stroke="#888" stroke-width="0.6"/></svg>
<svg class="a" style="left:610.5px;top:606px" width="10" height="9"><path d="M1.5 2.5h2.5l1 1h3.5v4.5h-7Z" fill="#c8c8c8"/><path d="M3.5 6.5l1.5-1.5 1 1 1.5-1.5" stroke="#666" stroke-width="0.7" fill="none"/></svg>

<!-- status bar -->
<div class="a" style="left:357px;top:618px;width:476px;height:18.5px;background:#242424;border-radius:5px 0 0 5px"></div>
<div class="a" style="left:358.5px;top:619.5px;width:7px;height:7px;border-radius:50%;background:#121212"></div>
<div class="a" style="left:376px;top:619.8px;width:13px;height:14.5px;background:#3b3b3b"></div>
<div class="a" style="left:391.5px;top:619.8px;width:26.19999999999999px;height:14.5px;background:#3b3b3b"></div>
<div class="a" style="left:419px;top:619.8px;width:37px;height:14.5px;background:#3b3b3b"></div>
<div class="a" style="left:462px;top:619.8px;width:14px;height:14.5px;background:#3b3b3b"></div>
<div class="a" style="left:478.6px;top:619.8px;width:13.899999999999977px;height:14.5px;background:#3b3b3b"></div>
<div class="a" style="left:494px;top:619.8px;width:13.5px;height:14.5px;background:#3b3b3b"></div>
<div class="a" style="left:508px;top:619.8px;width:14px;height:14.5px;background:#34465c"></div>
<div class="a" style="left:523.7px;top:619.8px;width:13.899999999999977px;height:14.5px;background:#3b3b3b"></div>
<div class="a" style="left:539.4px;top:619.8px;width:13.899999999999977px;height:14.5px;background:#34465c"></div>
<div class="a" style="left:554px;top:619.8px;width:14px;height:14.5px;background:#34465c"></div>
<div class="a" style="left:570px;top:619.8px;width:14px;height:14.5px;background:#34465c"></div>
<div class="a" style="left:584.6px;top:619.8px;width:14.799999999999955px;height:14.5px;background:#34465c"></div>
<div class="a" style="left:600.3px;top:619.8px;width:13.1px;height:14.5px;background:#363636"></div>
<div class="a" style="left:623px;top:619.8px;width:14px;height:14.5px;background:#3b3b3b"></div>
<div class="a" style="left:637.5px;top:619.8px;width:14.0px;height:14.5px;background:#3b3b3b"></div>
<div class="a" style="left:653.3px;top:619.8px;width:13.900000000000091px;height:14.5px;background:#34465c"></div>
<div class="a" style="left:671.6px;top:619.8px;width:13.899999999999977px;height:14.5px;background:#3b3b3b"></div>
<div class="a" style="left:686.3px;top:619.8px;width:14.0px;height:14.5px;background:#34465c"></div>
<div class="a" style="left:702px;top:619.8px;width:13px;height:14.5px;background:#2e2e2e"></div>
<div class="a" style="left:716.8px;top:619.8px;width:13.900000000000091px;height:14.5px;background:#3b3b3b"></div>
<div class="a" style="left:732.5px;top:619.8px;width:13.899999999999977px;height:14.5px;background:#2e2e2e"></div>
<div class="a" style="left:751.6px;top:619.8px;width:14.799999999999955px;height:14.5px;background:#3b3b3b"></div>
<div class="a" style="left:786px;top:619px;width:47px;height:13.5px;background:#fff;border-radius:2px 0 0 2px"></div>
<div class="a" style="left:772px;top:623px;width:8px;height:8px;border-radius:50%;background:#1a1a1a;box-shadow:0 0 0 0.6px #666"></div><div class="a" style="left:774.5px;top:625.5px;width:3px;height:2px;background:#888"></div>
<svg class="a" style="left:376px;top:620px" width="13" height="14"><rect x="2" y="2.5" width="3.6" height="3.6" fill="#9ab8e0"/><rect x="7" y="2.5" width="3.6" height="3.6" fill="#eee"/><rect x="2" y="7.5" width="3.6" height="3.6" fill="#eee"/><rect x="7" y="7.5" width="3.6" height="3.6" fill="#eee"/></svg>
<div class="t" style="left:393.8px;top:624.6px;font-size:6.4px;color:#e4e4e4">PAPER</div>
<div class="t" style="left:422px;top:624.3px;font-size:6.9px;color:#e0e0e0">Layout1</div>
<svg class="a" style="left:449px;top:626px" width="5" height="4"><path d="M0.5 0.5h4L2.5 3Z" fill="#ccc"/></svg>
<svg class="a" style="left:462px;top:620px" width="14" height="14"><path d="M7 2v10M2 7h10" stroke="#ddd" stroke-width="0.9"/><circle cx="7" cy="7" r="1.8" fill="#eee"/><circle cx="10" cy="10.5" r="1.8" fill="#c83040"/></svg>
<svg class="a" style="left:478.6px;top:620px" width="14" height="14"><path d="M3 3.5h8M3 5.5h8M3 7.5h8M3 9.5h8M3 11.5h8" stroke="#999" stroke-width="0.6" stroke-dasharray="1,1"/></svg>
<svg class="a" style="left:494px;top:620px" width="14" height="14"><path d="M3.5 2.5v9M5.5 2.5v9M7.5 2.5v9M9.5 2.5v9M2.5 3.5h9M2.5 5.5h9M2.5 7.5h9M2.5 9.5h9" stroke="#e8e8e8" stroke-width="0.8"/></svg>
<svg class="a" style="left:508px;top:620px" width="14" height="14"><path d="M3.5 2v9.5H12" stroke="#b8d0f0" stroke-width="1" fill="none"/><path d="M3.5 8H6.5V11.5" stroke="#b8d0f0" stroke-width="0.8" fill="none"/></svg>
<svg class="a" style="left:523.7px;top:620px" width="14" height="14"><circle cx="6.5" cy="7.5" r="4" stroke="#ddd" stroke-width="1.1" fill="none"/><path d="M6.5 7.5L11 3" stroke="#ddd" stroke-width="1.1"/></svg>
<svg class="a" style="left:539.4px;top:620px" width="14" height="14"><rect x="3.5" y="3.5" width="8" height="8" stroke="#c8dcf4" stroke-width="0.9" fill="none"/><circle cx="3.5" cy="3.5" r="1.3" fill="#e04040"/></svg>
<svg class="a" style="left:554px;top:620px" width="14" height="14"><path d="M2.5 11.5H12M2.5 11.5L10 3.5" stroke="#c8dcf4" stroke-width="0.9" fill="none"/></svg>
<svg class="a" style="left:570px;top:620px" width="14" height="14"><path d="M2 5.5h5M4.5 3v5" stroke="#eee" stroke-width="1"/><rect x="6" y="7" width="6" height="3" fill="#eee"/></svg>
<svg class="a" style="left:584.6px;top:620px" width="15" height="14"><path d="M2.5 4h10M2.5 7h10M2.5 10h6" stroke="#eee" stroke-width="1.2"/></svg>
<svg class="a" style="left:600.3px;top:620px" width="13" height="14"><defs><pattern id="hp" width="2" height="2" patternUnits="userSpaceOnUse"><rect width="2" height="2" fill="#4a70c0"/><rect width="1" height="1" fill="#7ea0e0"/><rect x="1" y="1" width="1" height="1" fill="#7ea0e0"/></pattern></defs><rect x="2.2" y="2.2" width="9" height="10" fill="url(#hp)" stroke="#e0e0e0" stroke-width="0.9"/></svg>
<svg class="a" style="left:623px;top:620px" width="14" height="14"><path d="M4 11.5C3 9 2 7.5 2.5 6.5S4 7 4.5 8V3.5a.8.8 0 0 1 1.6 0V7V2.5a.8.8 0 0 1 1.6 0V7V3a.8.8 0 0 1 1.6 0V7.5V4.5a.8.8 0 0 1 1.6 0V9c0 1.5-1 2.5-2 2.5Z" fill="#e8e8e8"/></svg>
<svg class="a" style="left:637.5px;top:620px" width="14" height="14"><circle cx="6" cy="6" r="3" fill="#eee"/><path d="M8 8l3.5 3.5" stroke="#eee" stroke-width="1.6"/></svg>
<svg class="a" style="left:653.3px;top:620px" width="14" height="14"><path d="M7 2L12 4.5V9.5L7 12L2 9.5V4.5Z" fill="#e8e8e8"/><path d="M2 4.5L7 7L12 4.5M7 7V12" stroke="#888" stroke-width="0.6" fill="none"/></svg>
<svg class="a" style="left:671.6px;top:620px" width="14" height="14"><circle cx="9" cy="4" r="2" stroke="#eee" stroke-width="0.9" fill="none"/><path d="M2.5 11.5L6 7l2 3M4.5 5l2 2" stroke="#eee" stroke-width="1.2" fill="none"/></svg>
<svg class="a" style="left:686.3px;top:620px" width="14" height="14"><path d="M2.5 11.5L6 7l2 3M4.5 5l2 2M9 2.5l1 2 2 .3-1.5 1.3.4 2L9 7l-1.8 1 .4-2L6 4.8l2-.3Z" stroke="#eee" stroke-width="0.9" fill="none"/></svg>
<svg class="a" style="left:706px;top:624px" width="5" height="6"><path d="M4 0.5L1 3L4 5.5" stroke="#777" stroke-width="0.9" fill="none"/></svg>
<svg class="a" style="left:716.8px;top:620px" width="14" height="14"><rect x="2.5" y="3" width="9" height="9" fill="#d8d8d8"/><rect x="4" y="5" width="7" height="6.5" fill="#5a7ab8"/><path d="M2.5 3h9" stroke="#d04040" stroke-width="1"/></svg>
<svg class="a" style="left:737px;top:624px" width="5" height="6"><path d="M1 0.5L4 3L1 5.5" stroke="#777" stroke-width="0.9" fill="none"/></svg>
<svg class="a" style="left:751.6px;top:620px" width="15" height="14"><rect x="2" y="2" width="11" height="10" fill="#e8e8e8"/><path d="M3 3L6 6M12 3L9 6M3 11L6 8M12 11L9 8" stroke="#555" stroke-width="1.1"/></svg>
<div class="a" style="left:0;top:636.5px;width:833px;height:3.5px;background:linear-gradient(90deg,#141212,#181414 40%,#2a1616 55%,#1e1515 70%,#3a1c1c 85%,#2a1818)"></div>
</body></html>
